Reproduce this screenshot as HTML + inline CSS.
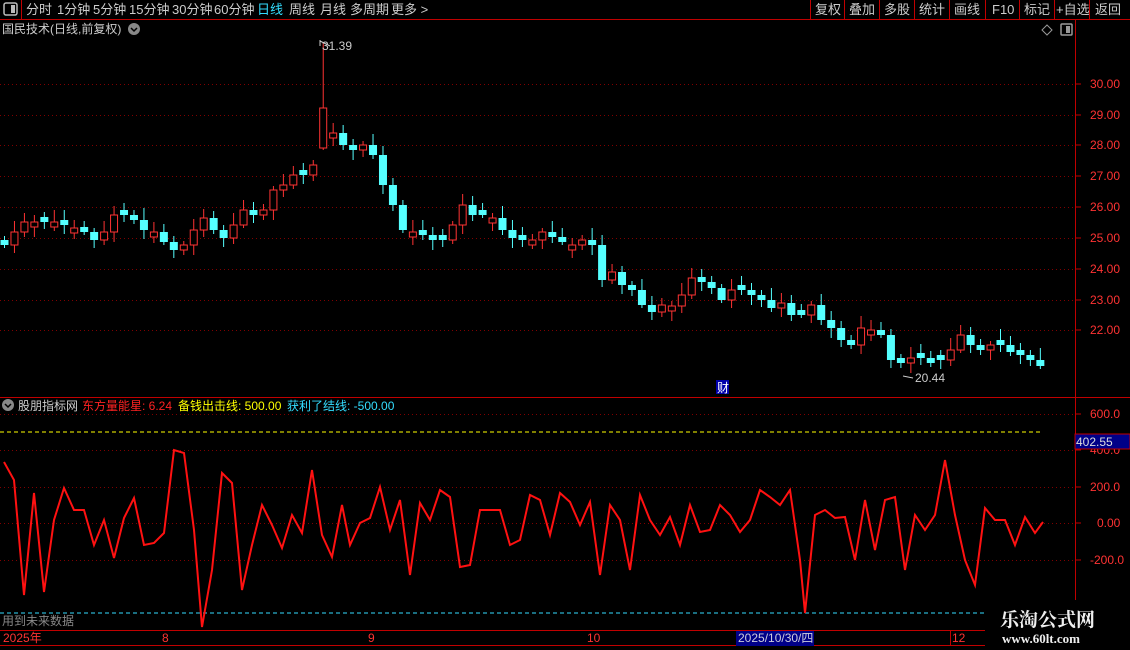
<!DOCTYPE html>
<html><head><meta charset="utf-8"><style>
body{margin:0;background:#000;width:1130px;height:650px;overflow:hidden;font-family:"Liberation Sans","Noto Sans CJK SC",sans-serif;}
</style></head><body>
<svg id="s" width="1130" height="650" style="position:absolute;left:0;top:0" xmlns="http://www.w3.org/2000/svg">
<g font-family="Liberation Sans, Noto Sans CJK SC, sans-serif" font-size="12">
<line x1="0" y1="19.5" x2="1130" y2="19.5" stroke="#c00000"/>
<line x1="21.5" y1="0" x2="21.5" y2="19" stroke="#c00000"/>
<rect x="4" y="3" width="13" height="12" rx="2" fill="none" stroke="#bbb" stroke-width="1.5"/><rect x="11" y="5" width="4" height="8" fill="#bbb"/>
<g fill="#ccc" font-size="13">
<text x="26" y="14">分时</text><text x="57" y="14">1分钟</text><text x="93" y="14">5分钟</text><text x="129" y="14">15分钟</text><text x="172" y="14">30分钟</text><text x="214" y="14">60分钟</text>
<text x="257" y="14" fill="#33ddff">日线</text><text x="289" y="14">周线</text><text x="320" y="14">月线</text><text x="350" y="14">多周期</text><text x="391" y="14">更多 &gt;</text>
</g>
<g stroke="#c00000"><line x1="810.5" y1="0" x2="810.5" y2="19"/><line x1="844.5" y1="0" x2="844.5" y2="19"/><line x1="879.5" y1="0" x2="879.5" y2="19"/><line x1="914.5" y1="0" x2="914.5" y2="19"/><line x1="949.5" y1="0" x2="949.5" y2="19"/><line x1="985.5" y1="0" x2="985.5" y2="19"/><line x1="1019.5" y1="0" x2="1019.5" y2="19"/><line x1="1054.5" y1="0" x2="1054.5" y2="19"/><line x1="1089.5" y1="0" x2="1089.5" y2="19"/></g>
<g fill="#ccc" font-size="13"><text x="815" y="14">复权</text><text x="849" y="14">叠加</text><text x="884" y="14">多股</text><text x="919" y="14">统计</text><text x="954" y="14">画线</text><text x="992" y="14">F10</text><text x="1024" y="14">标记</text><text x="1056" y="14">+自选</text><text x="1095" y="14">返回</text></g>
<text x="2" y="33" fill="#ccc">国民技术(日线,前复权)</text>
<circle cx="134" cy="29" r="6" fill="#888"/><path d="M131 28l3 3 3-3" stroke="#000" fill="none" stroke-width="1.5"/>
<path d="M1047 25l5 5-5 5-5-5z" fill="none" stroke="#999"/>
<rect x="1061" y="24" width="11" height="11" rx="1" fill="none" stroke="#999" stroke-width="1.5"/><rect x="1066" y="26" width="4" height="7" fill="#999"/>
<line x1="1075.5" y1="20" x2="1075.5" y2="650" stroke="#c00000"/>
<line x1="0" y1="397.5" x2="1130" y2="397.5" stroke="#c00000"/>
<line x1="0" y1="630.5" x2="985" y2="630.5" stroke="#c00000"/>
<line x1="0" y1="645.5" x2="985" y2="645.5" stroke="#c00000"/>
<g id="grid" stroke="#800000" stroke-dasharray="1 3"></g>
<g id="ax" fill="#ff3333"></g>
<g id="c"></g>
<text x="322" y="50" fill="#ccc">31.39</text><path d="M320 40l0 6M320 41l10 5" stroke="#ccc" fill="none"/>
<text x="915" y="382" fill="#ccc">20.44</text><path d="M903 376l10 2" stroke="#ccc"/>
<rect x="716" y="380" width="13" height="14" fill="#0000aa"/><text x="717" y="392" fill="#fff">财</text>
<circle cx="8" cy="405" r="6" fill="#888"/><path d="M5 404l3 3 3-3" stroke="#000" fill="none" stroke-width="1.5"/>
<text x="18" y="410" fill="#ccc">股朋指标网</text>
<text x="82" y="410" fill="#ff2222">东方量能星: 6.24</text>
<text x="178" y="410" fill="#ffff00">备钱出击线: 500.00</text>
<text x="287" y="410" fill="#33ddff">获利了结线: -500.00</text>
<line x1="0" y1="432" x2="1040" y2="432" stroke="#ffff00" stroke-dasharray="4 3"/>
<line x1="0" y1="613" x2="1040" y2="613" stroke="#33ddff" stroke-dasharray="4 3"/>
<polyline id="ind" fill="none" stroke="#ff1111" stroke-width="2"/>
<rect x="1075" y="434" width="55" height="15" fill="#000088" stroke="#c00000"/>
<text x="1076" y="446" fill="#ddd">402.55</text>
<text x="2" y="625" fill="#888">用到未来数据</text>
<text x="3" y="642" fill="#ff3333">2025年</text>
<text x="162" y="642" fill="#ff3333">8</text><text x="368" y="642" fill="#ff3333">9</text><text x="587" y="642" fill="#ff3333">10</text>
<rect x="736" y="631" width="78" height="15" fill="#000088"/><text x="738" y="642" fill="#ccd">2025/10/30/四</text>
<line x1="950.5" y1="630" x2="950.5" y2="645" stroke="#c00000"/><text x="952" y="642" fill="#ff3333">12</text>
<rect x="985" y="600" width="145" height="50" fill="#000"/>
<text x="1000" y="626" fill="#eee" font-size="19" font-weight="bold" font-family="Liberation Serif, Noto Serif CJK SC, serif">乐淘公式网</text>
<text x="1002" y="643" fill="#eee" font-size="13" font-weight="bold" font-family="Liberation Serif, serif">www.60lt.com</text>
</g></svg>
<script>
(function(){
var NS="http://www.w3.org/2000/svg";
function el(p,t,a){var e=document.createElementNS(NS,t);for(var k in a)e.setAttribute(k,a[k]);p.appendChild(e);return e;}
var g=document.getElementById("grid"),ax=document.getElementById("ax");
[[84,"30.00"],[115,"29.00"],[145,"28.00"],[176,"27.00"],[207,"26.00"],[238,"25.00"],[269,"24.00"],[300,"23.00"],[330,"22.00"]].forEach(function(v){
el(g,"line",{x1:0,y1:v[0]+.5,x2:1075,y2:v[0]+.5});el(ax,"line",{x1:1075,y1:v[0],x2:1081,y2:v[0],stroke:"#c00000"});
var t=el(ax,"text",{x:1090,y:v[0]+4});t.textContent=v[1];});
[[414,"600.0"],[450,"400.0"],[487,"200.0"],[523,"0.00"],[560,"-200.0"]].forEach(function(v){
el(g,"line",{x1:0,y1:v[0]+.5,x2:1075,y2:v[0]+.5});el(ax,"line",{x1:1075,y1:v[0],x2:1081,y2:v[0],stroke:"#c00000"});
var t=el(ax,"text",{x:v[1].length>4?1090:1097,y:v[0]+4});t.textContent=v[1];});
var m=[245,232,222,222,222,222,225,228,232,240,232,215,215,220,230,232,242,250,245,230,218,230,238,225,210,215,210,190,185,175,175,165,130,133,145,150,145,155,185,205,230,232,235,240,240,225,205,215,215,218,230,238,240,240,232,237,242,245,240,245,280,272,285,290,305,312,305,306,295,278,282,288,300,290,290,295,300,308,303,315,315,305,320,328,340,345,328,330,335,360,363,358,358,363,360,350,335,345,350,345,345,352,355,360,366];
var c=document.getElementById("c");
for(var i=0;i<m.length;i++){
var x=4+i*9.96,o=i?m[i-1]:m[0]+4,cl=m[i];
if(Math.abs(o-cl)<5){o=cl+(i%2?5:-5);}
var up=cl<o,col=up?"#ff3333":"#55ffff";
var tp=Math.min(o,cl),bt=Math.max(o,cl);
var hi=tp-4-(i*7%9),lo=bt+3+(i*5%8);
if(i==32){tp=108;bt=148;hi=42;lo=150;up=true;col="#ff3333";}
el(c,"line",{x1:x+.5,y1:hi,x2:x+.5,y2:lo,stroke:col});
if(up)el(c,"rect",{x:x-3,y:tp,width:7,height:bt-tp,fill:"#000",stroke:col});
else el(c,"rect",{x:x-3.5,y:tp,width:8,height:bt-tp,fill:col});
}
var p="4,462 14,480 24,595 34,493 44,592 54,520 64,488 74,510 84,510 94,545 104,520 114,558 124,518 134,498 144,545 154,543 164,533 174,450 184,453 194,530 202,627 212,570 222,473 232,483 242,590 252,545 262,505 272,525 282,548 292,515 302,533 312,470 322,535 332,557 342,505 350,545 360,523 370,518 380,487 390,530 400,500 410,575 420,503 430,520 440,490 450,497 460,567 470,565 480,510 490,510 500,510 510,545 520,540 530,495 540,500 550,535 560,493 570,502 580,525 590,502 600,575 610,505 620,520 630,570 640,495 650,520 660,535 670,517 680,545 690,505 700,532 710,530 720,505 730,515 740,532 750,520 760,490 770,497 780,505 790,490 800,560 805,613 815,515 825,510 835,518 845,517 855,560 865,500 875,550 885,500 895,497 905,570 915,515 925,530 935,515 945,460 955,515 965,560 975,585 985,508 995,520 1005,520 1015,545 1025,517 1035,533 1043,522";
document.getElementById("ind").setAttribute("points",p);
})();
</script>
</body></html>
